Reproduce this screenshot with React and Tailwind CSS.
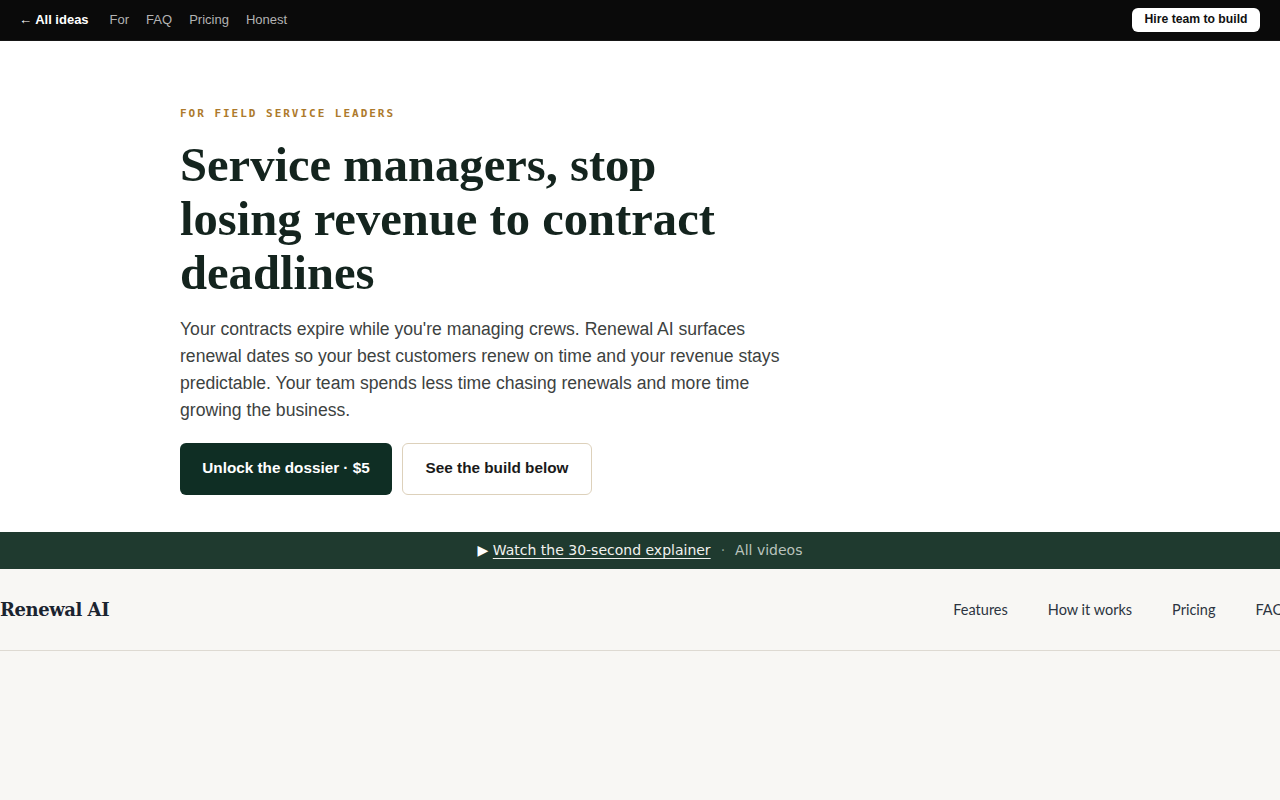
const topLinks = ["For", "FAQ", "Pricing", "Honest"];
const productLinks = ["Features", "How it works", "Pricing", "FAQ"];

export default function App() {
  return (
    <div className="min-h-[800px] bg-[#f8f7f4] font-['Liberation_Sans',Arial,sans-serif]">
      <header className="flex h-[41px] items-center justify-between border-b border-[#161616] bg-[#0a0a0a] pb-px pl-[19px] pr-5">
        <nav className="flex items-center gap-[17px] text-[13px]">
          <a className="mr-1 font-bold text-white" href="#">
            ← All ideas
          </a>
          {topLinks.map((link) => (
            <a className="text-[#b3b3b3]" href="#" key={link}>
              {link}
            </a>
          ))}
        </nav>
        <a
          className="flex h-6 w-32 items-center justify-center rounded-md bg-white text-[12.2px] font-bold text-[#111]"
          href="#"
        >
          Hire team to build
        </a>
      </header>

      <section className="bg-white px-[180px] pb-[37px] pt-[65px]">
        <p className="font-['DejaVu_Sans_Mono',monospace] text-[11px] font-bold uppercase tracking-[0.18em] text-[#ad7a2c]">
          For field service leaders
        </p>
        <h1 className="mt-[15px] max-w-[600px] font-['Liberation_Serif','Times_New_Roman',serif] text-[48.6px] font-bold leading-[54px] text-[#14241e]">
          Service managers, stop losing revenue to contract deadlines
        </h1>
        <p className="mt-[16px] max-w-[608px] text-[17.6px] leading-[27px] text-[#3d423f]">
          Your contracts expire while you're managing crews. Renewal AI surfaces
          renewal dates so your best customers renew on time and your revenue
          stays predictable. Your team spends less time chasing renewals and
          more time growing the business.
        </p>
        <div className="mt-[19px] flex gap-[10px]">
          <a
            className="flex h-[52px] w-[212px] items-center justify-center rounded-md bg-[#0f2e24] text-[15.3px] font-bold text-white"
            href="#"
          >
            Unlock the dossier · $5
          </a>
          <a
            className="flex h-[52px] w-[190px] items-center justify-center rounded-md border border-[#ddd1bb] bg-white text-[15.3px] font-bold text-[#1a1a1a]"
            href="#"
          >
            See the build below
          </a>
        </div>
      </section>

      <div className="flex h-[37px] items-center justify-center gap-[10px] bg-[#1f3a2f] font-['DejaVu_Sans',sans-serif] text-[14px]">
        <span className="text-white">
          ▶{" "}
          <a className="text-[#f1f1ee] underline underline-offset-[3px]" href="#">
            Watch the 30-second explainer
          </a>
        </span>
        <span className="text-[#8fa096]">·</span>
        <a className="text-[#b9c3bd]" href="#">
          All videos
        </a>
      </div>

      <div className="overflow-hidden border-b border-[#dedad2]">
        <div className="flex h-[81px] w-[1284px] items-center justify-between pt-px">
          <span className="font-['DejaVu_Serif',serif] text-[18px] font-bold tracking-[-0.025em] text-[#1b2430]">
            Renewal AI
          </span>
          <nav className="flex gap-10 font-['Lato',sans-serif] text-[14.5px] text-[#2c3440]">
            {productLinks.map((link) => (
              <a href="#" key={link}>
                {link}
              </a>
            ))}
          </nav>
        </div>
      </div>
    </div>
  );
}
